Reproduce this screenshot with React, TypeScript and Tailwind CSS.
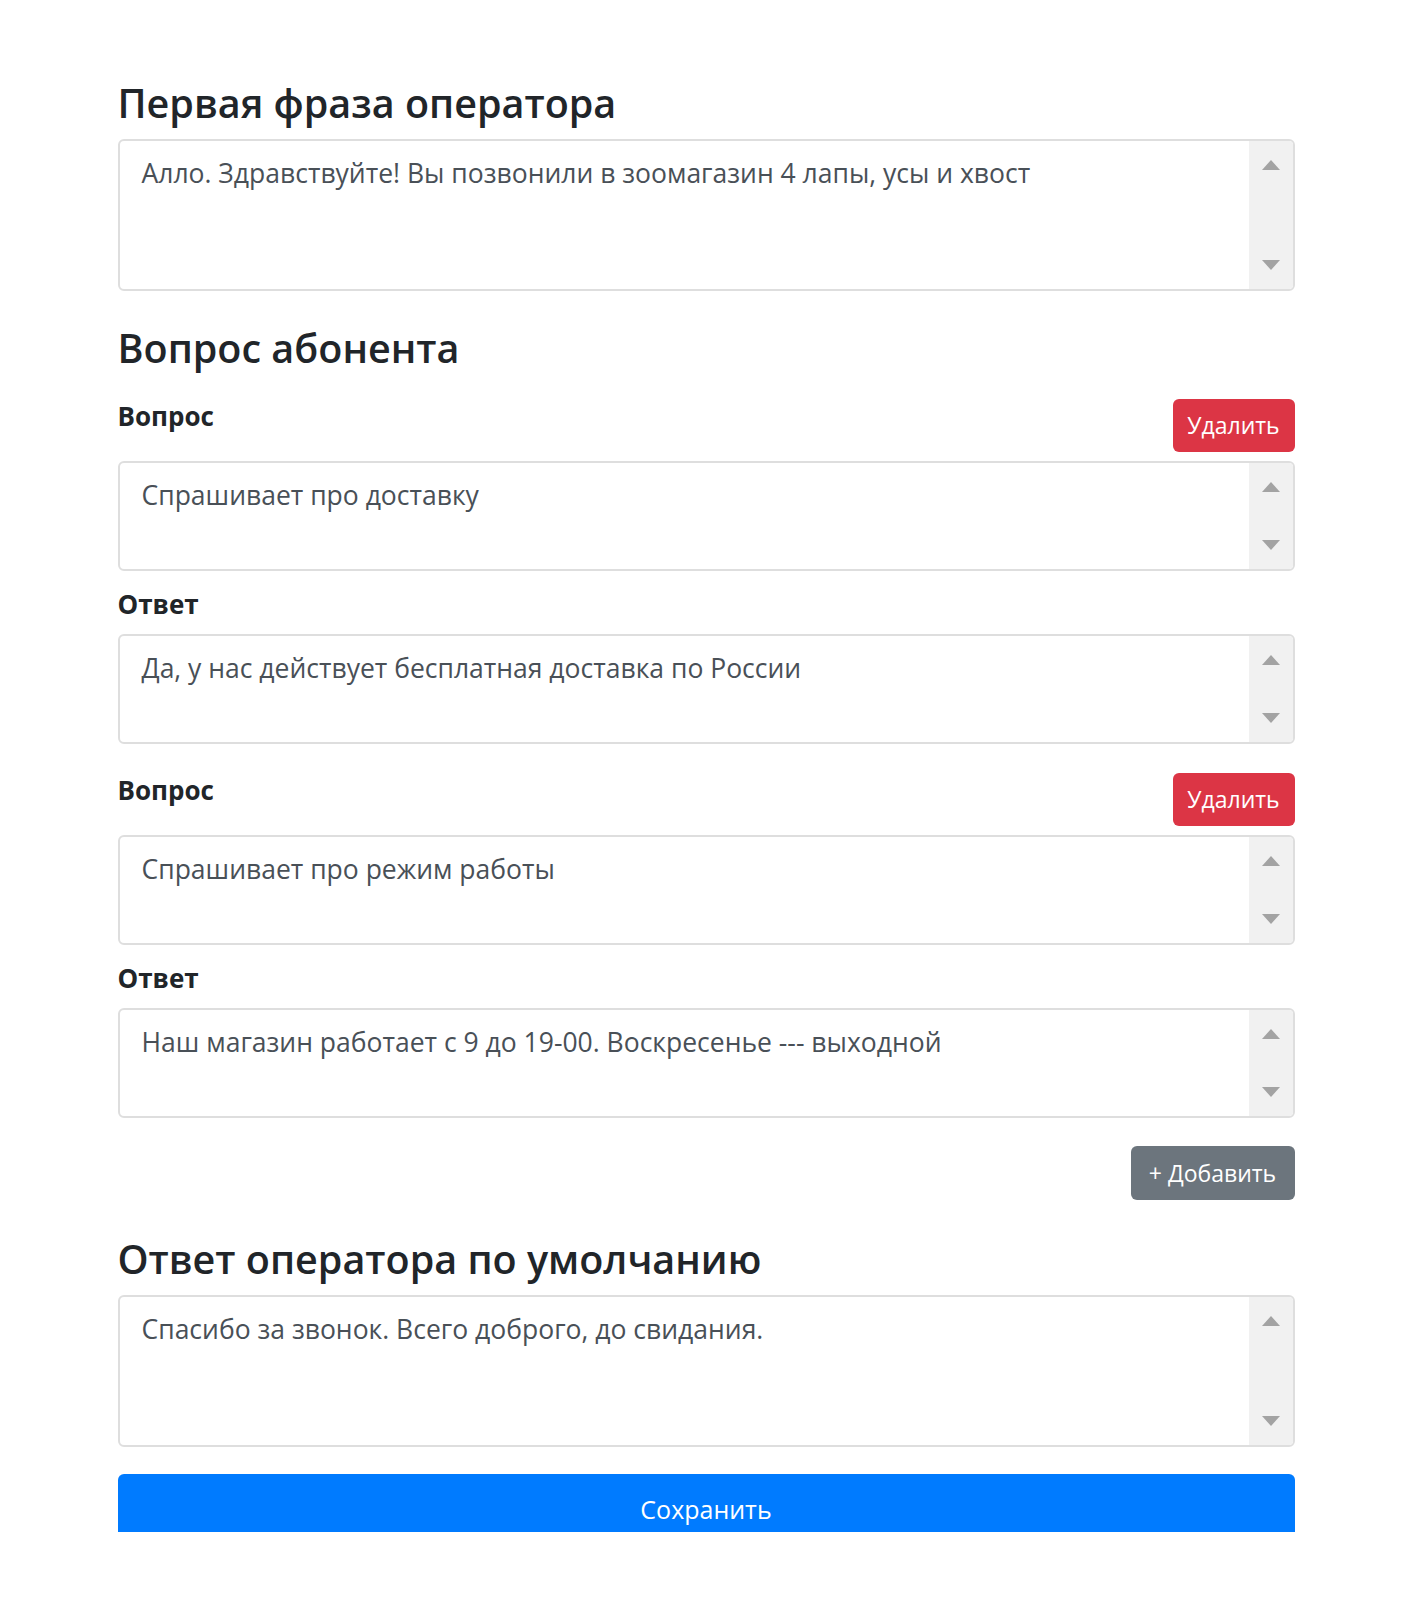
import { FC } from "react"

const ScrollTrack: FC = () => (
  <div className="flex w-[44px] shrink-0 flex-col items-center justify-between bg-[#f1f1f1] py-[19px]">
    <svg width="18" height="10" viewBox="0 0 18 10">
      <path d="M9 0 L18 10 L0 10 Z" fill="#a3a3a3" />
    </svg>
    <svg width="18" height="10" viewBox="0 0 18 10">
      <path d="M0 0 L18 0 L9 10 Z" fill="#a3a3a3" />
    </svg>
  </div>
)

const Field: FC<{ value: string; tall?: boolean }> = ({ value, tall }) => (
  <div className={"flex overflow-hidden rounded-[6px] border-2 border-[#dedede] bg-white " + (tall ? "h-[152px]" : "h-[110px]")}>
    <textarea
      readOnly
      value={value}
      className="flex-1 resize-none overflow-hidden bg-transparent px-[22px] pt-[14px] text-[26.5px] leading-[36px] text-[#495057] outline-none"
    />
    <ScrollTrack />
  </div>
)

const Label: FC<{ text: string }> = ({ text }) => (
  <p className="text-[26px] font-bold leading-[34px] text-[#212529]">{text}</p>
)

const DeleteButton: FC = () => (
  <button className="h-[53px] w-[122px] rounded-[6px] bg-[#dc3545] text-[23px] text-white">Удалить</button>
)

const QuestionBlock: FC<{ question: string; answer: string; first?: boolean }> = ({ question, answer, first }) => (
  <div className={first ? "mt-[28px]" : "mt-[29px]"}>
    <div className="flex items-start justify-between">
      <Label text="Вопрос" />
      <DeleteButton />
    </div>
    <div className="mt-[9px]">
      <Field value={question} />
    </div>
    <div className="mt-[16px]">
      <Label text="Ответ" />
    </div>
    <div className="mt-[13px]">
      <Field value={answer} />
    </div>
  </div>
)

const App: FC = () => {
  return (
    <div className="min-h-[1618px] bg-white font-['Segoe_UI','Open_Sans',sans-serif]">
      <div className="mx-auto w-[1177px] pt-[80px]">
        <h2 className="text-[39.5px] font-semibold leading-[46px] text-[#212529]">Первая фраза оператора</h2>
        <div className="mt-[13px]">
          <Field tall value="Алло. Здравствуйте! Вы позвонили в зоомагазин 4 лапы, усы и хвост" />
        </div>

        <h2 className="mt-[34px] text-[39.5px] font-semibold leading-[46px] text-[#212529]">Вопрос абонента</h2>
        <QuestionBlock
          first
          question="Спрашивает про доставку"
          answer="Да, у нас действует бесплатная доставка по России"
        />
        <QuestionBlock
          question="Спрашивает про режим работы"
          answer="Наш магазин работает с 9 до 19-00. Воскресенье --- выходной"
        />

        <div className="mt-[28px] flex justify-end">
          <button className="h-[54px] w-[164px] rounded-[6px] bg-[#6c757d] text-[23px] text-white">+ Добавить</button>
        </div>

        <h2 className="mt-[36px] text-[39.5px] font-semibold leading-[46px] text-[#212529]">Ответ оператора по умолчанию</h2>
        <div className="mt-[13px]">
          <Field tall value="Спасибо за звонок. Всего доброго, до свидания." />
        </div>

        <div className="mt-[27px] h-[58px] overflow-hidden">
          <button className="h-[72px] w-full rounded-[6px] bg-[#007bff] text-[25px] text-white">Сохранить</button>
        </div>
      </div>
    </div>
  )
}

export default App
